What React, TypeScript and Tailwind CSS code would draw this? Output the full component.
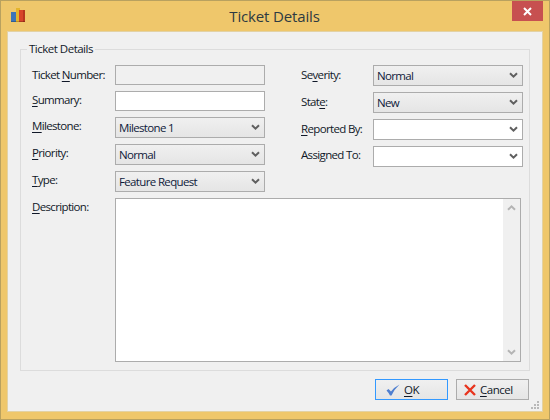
import React from "react";

const font = { fontFamily: '"Open Sans", sans-serif' };

function Chevron({ light }: { light?: boolean }) {
  return (
    <svg width="9" height="7" viewBox="0 0 9 7" className="shrink-0">
      <path d="M1 1.2 L4.5 4.7 L8 1.2" fill="none" stroke={light ? "#b4b4b4" : "#5f5f5f"} strokeWidth="2" />
    </svg>
  );
}

function U({ children }: { children: React.ReactNode }) {
  return <span className="underline underline-offset-2">{children}</span>;
}

function Label({ children, className = "" }: { children: React.ReactNode; className?: string }) {
  return <div className={`text-[11.5px] tracking-[-0.65px] leading-[16px] text-[#101828] whitespace-nowrap ${className}`}>{children}</div>;
}

function Combo({ value, white }: { value?: string; white?: boolean }) {
  return (
    <div
      className={`w-[150px] h-[21px] border border-[#acacac] flex items-center justify-between pl-[3px] pr-[4px] text-[11.5px] tracking-[-0.65px] text-[#0f1a3a] ${
        white ? "bg-white" : "bg-gradient-to-b from-[#f0f0f0] to-[#e5e5e5]"
      }`}
    >
      <span>{value}</span>
      <Chevron />
    </div>
  );
}

function Field({ label, children, labelWidth, top = "pt-[1px]" }: { label: React.ReactNode; children: React.ReactNode; labelWidth: string; top?: string }) {
  return (
    <div className="flex items-start">
      <Label className={`${labelWidth} ${top}`}>{label}</Label>
      {children}
    </div>
  );
}

export default function App() {
  return (
    <div style={font} className="w-[550px] h-[420px] bg-[#efc76b] border border-[#b9a15f] flex flex-col overflow-hidden">
      <div className="h-[30px] shrink-0 flex items-start relative">
        <svg width="16" height="16" viewBox="0 0 16 16" className="ml-[10px] mt-[6px]">
          <rect x="0" y="5" width="5" height="10" fill="#3e74b8" />
          <rect x="5" y="1" width="4" height="14" fill="#e5b52c" />
          <rect x="8" y="3" width="6" height="12" fill="#d8442a" />
          <rect x="12" y="3" width="2" height="12" fill="#b8361f" />
          <rect x="0" y="14" width="14" height="1" fill="#000" opacity="0.2" />
        </svg>
        <div className="flex-1 text-center text-[15px] tracking-[-0.15px] leading-[30px] text-[#2d3a42] pl-[10px]">Ticket Details</div>
        <div className="w-[31px] h-[20px] mr-[6px] bg-[#c75050] flex items-center justify-center">
          <svg width="9" height="9" viewBox="0 0 9 9">
            <path d="M1 1 L8 8 M8 1 L1 8" stroke="#fff" strokeWidth="2" />
          </svg>
        </div>
      </div>

      <div className="mx-[6px] mb-[7px] flex-1 bg-[#f0f0f0] border border-[#e3d2a4] px-[12px] pt-[17px] relative flex flex-col">
        <div className="h-[322px] border border-[#dcdcdc] relative pt-[15px] pl-[11px] pr-[8px] flex flex-col shrink-0">
          <div className="absolute left-[6px] -top-[9px] bg-[#f0f0f0] px-[2px] text-[11.5px] tracking-[-0.5px] leading-[16px] text-[#101828]">
            Ticket Details
          </div>
          <div className="flex items-start">
            <div className="flex flex-col gap-[6px]">
              <Field labelWidth="w-[83px]" top="pt-[2px]" label={<>Ticket <U>N</U>umber:</>}>
                <div className="w-[150px] h-[20px] border border-[#acacac] bg-[#f0f0f0]" />
              </Field>
              <Field labelWidth="w-[83px]" label={<><U>S</U>ummary:</>}>
                <div className="w-[150px] h-[20px] border border-[#acacac] bg-white" />
              </Field>
              <Field labelWidth="w-[83px]" label={<><U>M</U>ilestone:</>}>
                <Combo value="Milestone 1" />
              </Field>
              <Field labelWidth="w-[83px]" label={<><U>P</U>riority:</>}>
                <Combo value="Normal" />
              </Field>
              <Field labelWidth="w-[83px]" label={<><U>T</U>ype:</>}>
                <Combo value="Feature Request" />
              </Field>
            </div>
            <div className="w-px h-[115px] bg-[#a0a0a0] ml-[15px] mr-[21px] mt-[5px]" />
            <div className="flex flex-col gap-[6px]">
              <Field labelWidth="w-[72px]" top="pt-[2px]" label={<>Se<U>v</U>erity:</>}>
                <Combo value="Normal" />
              </Field>
              <Field labelWidth="w-[72px]" top="pt-[2px]" label={<>Stat<U>e</U>:</>}>
                <Combo value="New" />
              </Field>
              <Field labelWidth="w-[72px]" top="pt-[2px]" label={<><U>R</U>eported By:</>}>
                <Combo white />
              </Field>
              <Field labelWidth="w-[72px]" label={<>Assi<U>g</U>ned To:</>}>
                <Combo white />
              </Field>
            </div>
          </div>
          <div className="flex items-start mt-[6px]">
            <Label className="w-[83px] pt-[1px]"><U>D</U>escription:</Label>
            <div className="w-[406px] h-[164px] border border-[#acacac] bg-white flex justify-end">
              <div className="w-[17px] h-full bg-[#f0f0f0] flex flex-col justify-between items-center py-[5px]">
                <div className="rotate-180"><Chevron light /></div>
                <Chevron light />
              </div>
            </div>
          </div>
        </div>
        <div className="flex justify-end gap-[8px] mt-[8px] pr-[1px]">
          <div className="w-[73px] h-[21px] border border-[#3399ff] bg-gradient-to-b from-[#f0f0f0] to-[#e5e5e5] flex items-center pl-[10px] gap-[4px] text-[11.5px] tracking-[-0.5px] text-[#101828]">
            <svg width="14" height="12" viewBox="0 0 14 12">
              <path d="M0.5 6.5 L2.5 5 L5 7.5 Q8.5 3 13.5 0.5 Q8.5 5 5.5 11.5 L4 11.5 Q2.5 8.5 0.5 6.5 Z" fill="#4f7fd0" />
            </svg>
            <span><U>O</U>K</span>
          </div>
          <div className="w-[73px] h-[21px] border border-[#acacac] bg-gradient-to-b from-[#f0f0f0] to-[#e5e5e5] flex items-center pl-[7px] gap-[4px] text-[11.5px] tracking-[-0.5px] text-[#101828]">
            <svg width="12" height="12" viewBox="0 0 12 12">
              <path d="M1 1 L11 11 M11 1 L1 11" stroke="#e8351f" strokeWidth="2.4" />
            </svg>
            <span><U>C</U>ancel</span>
          </div>
        </div>
        <svg width="9" height="9" viewBox="0 0 9 9" className="absolute right-[2px] bottom-[1px]" fill="#b8b8b8">
          <rect x="6" y="0" width="2" height="2" />
          <rect x="3" y="3" width="2" height="2" />
          <rect x="6" y="3" width="2" height="2" />
          <rect x="0" y="6" width="2" height="2" />
          <rect x="3" y="6" width="2" height="2" />
          <rect x="6" y="6" width="2" height="2" />
        </svg>
      </div>
    </div>
  );
}
